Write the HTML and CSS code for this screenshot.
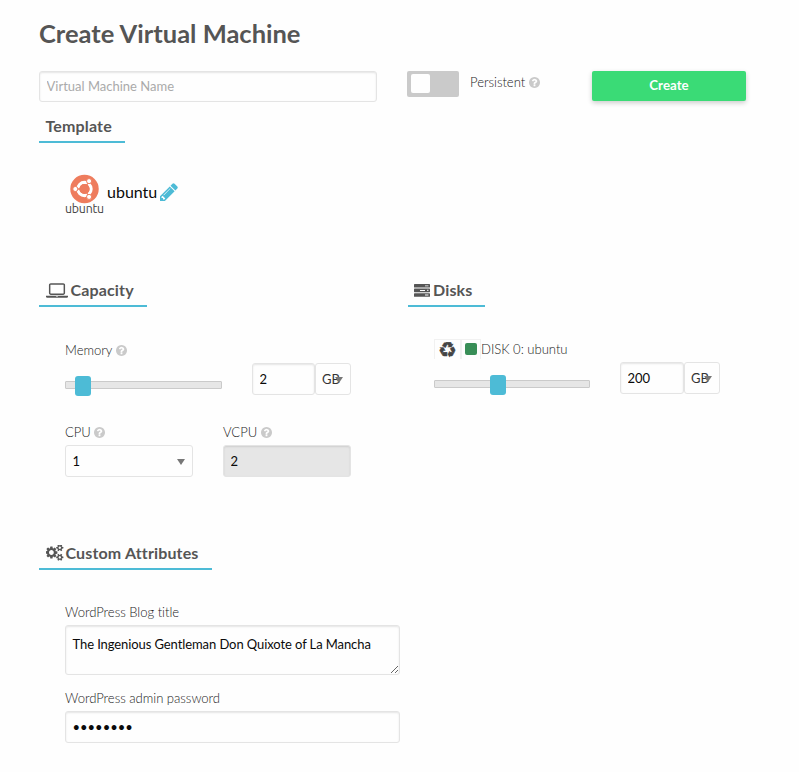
FILE: index.html
```html
<!DOCTYPE html>
<html lang="en">
<head>
<meta charset="utf-8">
<title>Create Virtual Machine</title>
<link rel="stylesheet" href="styles.css">
</head>
<body>
<svg width="0" height="0" class="defs">
  <symbol id="help" viewBox="128 128 1536 1536"><path d="M1024 1376v-192q0-14-9-23t-23-9h-192q-14 0-23 9t-9 23v192q0 14 9 23t23 9h192q14 0 23-9t9-23zm256-672q0-88-55.5-163t-138.5-116-170-41q-243 0-371 213-15 24 8 42l132 100q7 6 19 6 16 0 25-12 53-68 86-92 34-24 86-24 48 0 85.5 26t37.5 59q0 38-20 61t-68 45q-63 28-115.5 86.5t-52.5 125.5v36q0 14 9 23t23 9h192q14 0 23-9t9-23q0-19 21.5-49.5t54.5-49.5q32-18 49-28.5t46-35 44.5-48 28-60.5 12.5-81zm384 192q0 209-103 385.5t-279.5 279.5-385.5 103-385.5-103-279.5-279.5-103-385.5 103-385.5 279.5-279.5 385.5-103 385.5 103 279.5 279.5 103 385.5z"/></symbol>
</svg>
<main class="page">
  <h1>Create Virtual Machine</h1>
  <div class="toolbar">
    <input class="field name" type="text" placeholder="Virtual Machine Name">
    <span class="switch"><span class="knob"></span></span>
    <label class="persist">Persistent <svg class="help"><use href="#help"/></svg></label>
    <button class="create">Create</button>
  </div>

  <section class="template">
    <h2>Template</h2>
    <div class="tpl">
      <svg class="logo" viewBox="0 0 40 30">
        <circle cx="20" cy="15" r="14.6" fill="#ee7c5d"/>
        <circle cx="20" cy="15" r="6.8" fill="none" stroke="#fff" stroke-width="3.2"/>
        <g stroke="#ee7c5d" stroke-width="1.3"><path d="M20 15H9M20 15l5.5-9.5M20 15l5.5 9.5"/></g>
        <circle cx="20" cy="15" r="5.2" fill="#ee7c5d"/>
        <g fill="#fff" stroke="#ee7c5d" stroke-width="1"><circle cx="10.6" cy="15" r="2.6"/><circle cx="24.7" cy="6.9" r="2.6"/><circle cx="24.7" cy="23.1" r="2.6"/></g>
      </svg>
      <span class="wordmark">ubuntu</span>
      <span class="tplname">ubuntu</span>
      <svg class="pencil" viewBox="128 128 1536 1536"><path d="M491 1536l91-91-235-235-91 91v107h128v128h107zm523-928q0-22-22-22-10 0-17 7l-542 542q-7 7-7 17 0 22 22 22 10 0 17-7l542-542q7-7 7-17zm-54-192l416 416-832 832h-416v-416zm683 96q0 53-37 90l-166 166-416-416 166-165q36-38 90-38 53 0 91 38l235 234q37 39 37 91z"/></svg>
    </div>
  </section>

  <div class="columns">
    <section>
      <h2><svg class="laptop" viewBox="0 128 1920 1280"><path d="M416 1152q-66 0-113-47t-47-113v-704q0-66 47-113t113-47h1088q66 0 113 47t47 113v704q0 66-47 113t-113 47h-1088zm-32-864v704q0 13 9.5 22.5t22.5 9.5h1088q13 0 22.5-9.5t9.5-22.5v-704q0-13-9.5-22.5t-22.5-9.5h-1088q-13 0-22.5 9.5t-9.5 22.5zm1376 928h160v96q0 40-47 68t-113 28h-1600q-66 0-113-28t-47-68v-96h1760zm-720 96q16 0 16-16t-16-16h-160q-16 0-16 16t16 16h160z"/></svg>Capacity</h2>
      <div class="body">
        <label>Memory <svg class="help"><use href="#help"/></svg></label>
        <div class="sizer">
          <div class="slider memory"><span class="thumb"></span></div>
          <input class="field amount" type="text" value="2">
          <span class="field unit">GB<i class="arrow"></i></span>
        </div>
        <div class="cpus">
          <div><label>CPU <svg class="help"><use href="#help"/></svg></label><span class="field select">1<i class="arrow"></i></span></div>
          <div><label>VCPU <svg class="help"><use href="#help"/></svg></label><input class="field off" type="text" value="2" disabled></div>
        </div>
      </div>
    </section>
    <section>
      <h2><svg class="server" viewBox="0 0 16 13"><rect width="16" height="3.6" rx=".6"/><rect y="4.6" width="16" height="3.6" rx=".6"/><rect y="9.2" width="16" height="3.6" rx=".6"/><g fill="#fefefe"><path d="M11 1.4h3.4v.9H11zM6 6h5v.9H6zM13.2 5.8h1.2V7h-1.2zM11 10.6h3.4v.9H11z"/></g></svg>Disks</h2>
      <div class="body disk">
        <label class="disklabel"><span class="cell recycle">♻</span><span class="cell color"><span class="dot"></span></span>DISK 0: ubuntu</label>
        <div class="sizer">
          <div class="slider size"><span class="thumb"></span></div>
          <input class="field amount" type="text" value="200">
          <span class="field unit">GB<i class="arrow"></i></span>
        </div>
      </div>
    </section>
  </div>

  <section class="custom">
    <h2><svg class="cogs" viewBox="0 110 1920 1680"><path d="M832 896q0-106-75-181t-181-75-181 75-75 181 75 181 181 75 181-75 75-181zm768 512q0-52-38-90t-90-38-90 38-38 90q0 53 37.5 90.5t90.5 37.5 90.5-37.5 37.5-90.5zm0-1024q0-52-38-90t-90-38-90 38-38 90q0 53 37.5 90.5t90.5 37.5 90.5-37.5 37.5-90.5zm-384 421v185q0 10-7 19.5t-16 10.5l-155 24q-11 35-32 76 34 48 90 115 7 11 7 20 0 12-7 19-23 30-82.5 89.5t-78.5 59.5q-11 0-21-7l-115-90q-37 19-77 31-11 108-23 155-7 24-30 24h-186q-11 0-20-7.5t-10-17.5l-23-153q-34-10-75-31l-118 89q-7 7-20 7-11 0-21-8-144-133-144-160 0-9 7-19 10-14 41-53t47-61q-23-44-35-82l-152-24q-10-1-17-9.5t-7-19.5v-185q0-10 7-19.5t16-10.5l155-24q11-35 32-76-34-48-90-115-7-11-7-20 0-12 7-20 22-30 82-89t79-59q11 0 21 7l115 90q34-18 77-32 11-108 23-154 7-24 30-24h186q11 0 20 7.5t10 17.5l23 153q34 10 75 31l118-89q8-7 20-7 11 0 21 8 144 133 144 160 0 8-7 19-12 16-42 54t-45 60q23 48 34 82l152 23q10 2 17 10.5t7 19.5zm640 533v140q0 16-149 31-12 27-30 52 51 113 51 138 0 4-4 7-122 71-124 71-8 0-46-47t-52-68q-20 2-30 2t-30-2q-14 21-52 68t-46 47q-2 0-124-71-4-3-4-7 0-25 51-138-18-25-30-52-149-15-149-31v-140q0-16 149-31 13-29 30-52-51-113-51-138 0-4 4-7 4-2 35-20t59-34 30-16q8 0 46 46.5t52 67.5q20-2 30-2t30 2q51-71 92-112l6-2q4 0 124 70 4 3 4 7 0 25-51 138 17 23 30 52 149 15 149 31zm0-1024v140q0 16-149 31-12 27-30 52 51 113 51 138 0 4-4 7-122 71-124 71-8 0-46-47t-52-68q-20 2-30 2t-30-2q-14 21-52 68t-46 47q-2 0-124-71-4-3-4-7 0-25 51-138-18-25-30-52-149-15-149-31v-140q0-16 149-31 13-29 30-52-51-113-51-138 0-4 4-7 4-2 35-20t59-34 30-16q8 0 46 46.5t52 67.5q20-2 30-2t30 2q51-71 92-112l6-2q4 0 124 70 4 3 4 7 0 25-51 138 17 23 30 52 149 15 149 31z"/></svg>Custom Attributes</h2>
    <div class="body attrs">
      <label>WordPress Blog title</label>
      <textarea class="field">The Ingenious Gentleman Don Quixote of La Mancha</textarea>
      <label>WordPress admin password</label>
      <input class="field" type="password" value="password">
    </div>
  </section>
</main>
</body>
</html>
```
FILE: styles.css
```css
* { box-sizing: border-box; }
body { margin: 0; background: #fefefe; font-family: Lato, sans-serif; font-size: 13px; color: #0a0a0a; }
.defs { position: absolute; }
.page { height: 772px; padding: 20px 53px 0 39px; overflow: hidden; }
svg { fill: #555; flex: none; }
h1 { margin: 0; height: 51px; line-height: 27px; font-size: 25.5px; font-weight: 700; color: #555; }
h2 { display: flex; align-items: center; width: max-content; height: 34px; margin: 0; padding: 2px 13px 0 6.5px; border-bottom: 2px solid #4dbbd6; font-size: 16px; letter-spacing: .15px; line-height: 20px; font-weight: 700; color: #555; }
.template h2 { padding-right: 13.5px; }
label { display: flex; align-items: center; height: 20px; padding-bottom: 1px; font-weight: 300; font-size: 13.1px; letter-spacing: -.03px; color: #222; white-space: pre; }
.help { width: 11px; height: 11px; fill: #cacaca; position: relative; top: 1px; }

.field { display: block; width: 100%; height: 32px; margin: 0; padding: 0 6.5px 1px; border: 1px solid #e4e4e4; border-radius: 3px; background: #fefefe; box-shadow: inset 0 1px 2px rgba(10,10,10,.1); font: 400 13px Lato, sans-serif; color: #0a0a0a; outline: none; }
.field::placeholder { color: #aaa; opacity: 1; }
.toolbar { display: flex; align-items: flex-start; height: 38px; }
.name { width: 338px; height: 31px; }
.switch { width: 52px; height: 26px; margin-left: 30px; padding: 3px 4px; border-radius: 2px; background: #cacaca; }
.knob { display: block; width: 19px; height: 19px; border-radius: 2px; background: #fefefe; }
.persist { width: 122px; margin: 2px 0 0 11px; padding-bottom: 2px; }
.persist .help { top: 0; }
.create { width: 154px; height: 30px; padding: 0 0 2px; border: 0; border-radius: 2px; background: #3adb76; box-shadow: 0 2px 5px rgba(0,0,0,.2); color: #fefefe; font: 700 13.3px Lato, sans-serif; }

.template { height: 164px; }
.tpl { display: grid; grid-template: 29px 12px / 39px 53px 20px; column-gap: 3px; padding: 31px 0 0 26px; }
.logo { width: 39px; height: 30px; }
.wordmark { grid-area: 2 / 1; font: 12.3px/12px Ubuntu, "Noto Sans", sans-serif; letter-spacing: -.2px; color: #444; }
.tplname { grid-area: 1 / 2 / 3; height: 20px; margin-top: 8px; font-size: 16px; line-height: 20px; }
.pencil { grid-area: 1 / 3 / 3; width: 18px; height: 18px; margin: 9px 0 0 -3px; fill: #4dbbd6; }

.columns { display: grid; grid-template-columns: 369px 1fr; height: 263px; }
.laptop { width: 22px; height: 15px; margin-right: 3px; }
.server { width: 16px; height: 13px; margin-right: 3px; }
.columns section + section h2 { padding-left: 6px; }
.body { padding: 33px 0 0 26px; width: 312px; }
.sizer { display: flex; align-items: center; height: 32px; margin-top: 3px; }
.slider { width: 157px; height: 8px; margin: 11px 30px 0 0; border: 1px solid #cacaca; border-radius: 1px; background: #e6e6e6; }
.thumb { display: block; width: 16px; height: 20px; border-radius: 3px; background: #4dbbd6; }
.memory .thumb { margin: -6px 0 0 9px; }
.size .thumb { margin: -6px 0 0 55px; }
.amount { width: 63px; }
.unit { position: relative; width: 36px; padding: 0 6px; line-height: 30px; color: #333; box-shadow: none; }
.arrow { position: absolute; right: 7px; top: 13px; border: 4.5px solid transparent; border-top: 6px solid #777; border-bottom: 0; }
.cpus { display: grid; grid-template-columns: 128px 128px; gap: 30px; margin-top: 27px; }
.cpus .field { margin-top: 3px; }
.select { position: relative; line-height: 30px; box-shadow: none; }
.cpus .off { background: #e6e6e6; opacity: 1; }
.disk { padding: 32px 0 0 26px; width: 312px; }
.disk .slider { width: 156px; }
.disk .amount { width: 64px; }
.cell { display: flex; align-items: center; justify-content: center; height: 20px; border: 1px solid #f1f1f1; border-bottom: 0; }
.recycle { width: 27px; padding-top: 1px; font: 21px/18px "DejaVu Sans", sans-serif; color: #444; -webkit-text-stroke: .4px #444; }
.color { width: 20px; }
.dot { width: 12px; height: 12px; border-radius: 2px; background: #388e57; }

.attrs { width: 361px; padding-top: 32px; }
.attrs textarea { height: 50px; margin: 3px 0 13px; padding: 10px 6.5px; line-height: 17px; letter-spacing: -.09px; }
.attrs input { margin-top: 3px; }
.cogs { width: 18px; height: 16px; margin-right: 2px; }
```
